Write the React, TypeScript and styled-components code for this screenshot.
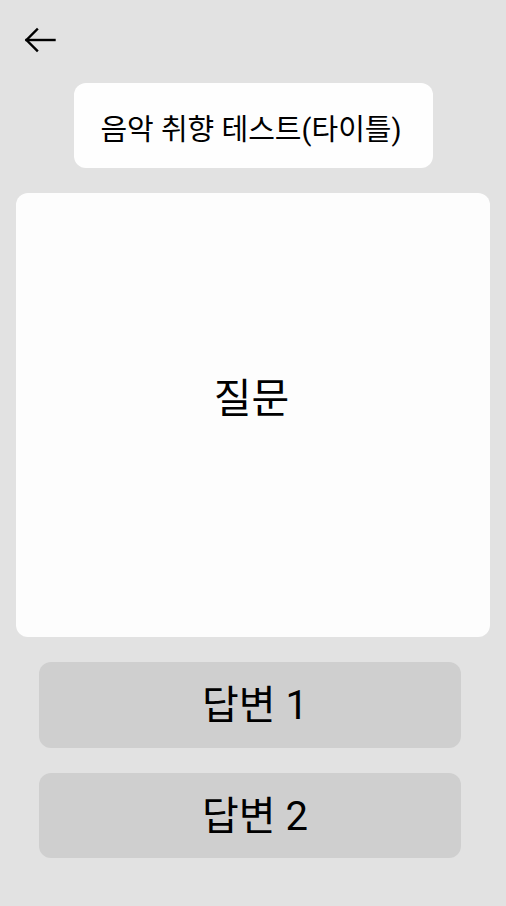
import React from "react";
import styled, { createGlobalStyle } from "styled-components";

const Global = createGlobalStyle`
  html, body { margin: 0; padding: 0; background: #e2e2e2; }
  body { font-family: Roboto, "Noto Sans CJK KR", sans-serif; color: #000; }
  #root { min-height: 906px; }
`;

const Page = styled.div`
  display: flex;
  flex-direction: column;
  align-items: center;
  gap: 25px;
  min-height: 906px;
  box-sizing: border-box;
`;

const Header = styled.header`
  align-self: stretch;
  height: 58px;
  padding: 27px 0 0 24px;
  box-sizing: border-box;
`;

const BackButton = styled.button`
  display: block;
  padding: 0;
  border: 0;
  background: none;
  width: 34px;
  height: 26px;
  cursor: pointer;
`;

const TitleCard = styled.div`
  width: 359px;
  height: 85px;
  background: #fefefe;
  border-radius: 12px;
  display: flex;
  align-items: center;
  justify-content: center;
  font-size: 29px;
  padding: 2px 4px 0 0;
  box-sizing: border-box;
`;

const QuestionCard = styled.div`
  width: 474px;
  height: 444px;
  background: #fdfdfd;
  border-radius: 12px;
  display: flex;
  align-items: center;
  justify-content: center;
  font-size: 41px;
  padding: 0 3px 40px 0;
  box-sizing: border-box;
`;

const Answer = styled.button<{ $h: number }>`
  width: 422px;
  height: ${(p) => p.$h}px;
  margin-right: 6px;
  background: #cfcfcf;
  border: 0;
  border-radius: 12px;
  display: flex;
  align-items: center;
  justify-content: center;
  font-family: Roboto, "Noto Sans CJK KR", sans-serif;
  font-size: 40px;
  color: #000;
  padding: 0 0 6px 10px;
  box-sizing: border-box;
`;

export default function App() {
  return (
    <>
      <Global />
      <Page>
        <Header>
          <BackButton aria-label="back">
            <svg width="34" height="26" viewBox="0 0 34 26" fill="none" stroke="#000" strokeWidth="2.4" strokeLinecap="square">
              <path d="M2.5 13H30.5" />
              <path d="M13 2.5L2.5 13L13 23.5" strokeLinejoin="miter" />
            </svg>
          </BackButton>
        </Header>
        <TitleCard>음악 취향 테스트(타이틀)</TitleCard>
        <QuestionCard>질문</QuestionCard>
        <Answer $h={86}>답변 1</Answer>
        <Answer $h={85}>답변 2</Answer>
      </Page>
    </>
  );
}
